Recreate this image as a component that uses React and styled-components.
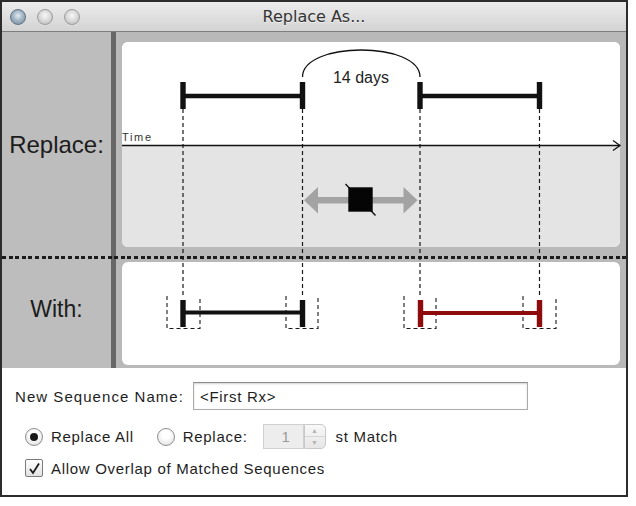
import React from 'react';
import styled, { createGlobalStyle } from 'styled-components';

const GlobalStyle = createGlobalStyle`
  body {
    margin: 0;
    background: #fff;
    font-family: 'Liberation Sans', Arial, sans-serif;
  }
`;

const Window = styled.div`
  width: 628px;
  height: 497px;
  box-sizing: border-box;
  border: 2px solid #2c2c2c;
  display: flex;
  flex-direction: column;
  background: #fff;
`;

const TitleBar = styled.div`
  height: 30px;
  box-sizing: border-box;
  display: grid;
  grid-template-columns: 1fr auto 1fr;
  align-items: center;
  background: linear-gradient(#ececec, #d3d3d3);
  border-bottom: 1px solid #7e7e7e;
`;

const Lights = styled.div`
  display: flex;
  gap: 11px;
  padding-left: 8px;
`;

const Light = styled.span`
  width: 16px;
  height: 16px;
  box-sizing: border-box;
  border-radius: 50%;
  border: 1px solid ${(p) => (p.$active ? '#5f7282' : '#9c9c9c')};
  background: ${(p) =>
    p.$active
      ? 'radial-gradient(circle at 50% 40%, #e4ecf2 0%, #a3b6c5 45%, #71879a 100%)'
      : 'radial-gradient(circle at 50% 40%, #f7f7f7 0%, #d8d8d8 50%, #b5b5b5 100%)'};
`;

const Title = styled.div`
  font-family: 'DejaVu Sans', 'Liberation Sans', sans-serif;
  font-size: 16px;
  color: #333;
  text-shadow: 0 1px 0 rgba(255, 255, 255, 0.6);
`;

const Body = styled.div`
  position: relative;
  height: 336px;
  display: grid;
  grid-template-columns: 109px 5px 1fr;
  grid-template-rows: 223px 5px 1fr;
  background: #b9b9b9;
`;

const LabelCell = styled.div`
  display: flex;
  align-items: center;
  justify-content: center;
  background: #bdbdbd;
  font-size: ${(p) => p.$size}px;
  color: #1c1c1c;
  padding: ${(p) => p.$pad};
`;

const SepBar = styled.div`
  background: #676767;
`;

const ContentCell = styled.div`
  padding: ${(p) => p.$pad};
  display: flex;
`;

const Divider = styled.div`
  grid-column: 1 / -1;
  box-sizing: border-box;
  padding-top: 1px;
  background: linear-gradient(
    to right,
    #bdbdbd 109px,
    #676767 109px,
    #676767 114px,
    #b9b9b9 114px
  );
  &::before {
    content: '';
    display: block;
    height: 3px;
    background: repeating-linear-gradient(to right, #1c1c1c 0 4px, transparent 4px 6.6px);
  }
`;

const Panel = styled.div`
  flex: 1;
  display: flex;
  flex-direction: column;
  border-radius: 6px;
  overflow: hidden;
  background: #fff;
`;

const PanelUpper = styled.div`
  height: 103px;
  background: #fff;
`;

const PanelLower = styled.div`
  flex: 1;
  background: #e4e4e4;
`;

const Overlay = styled.svg`
  position: absolute;
  left: 0;
  top: 0;
  pointer-events: none;
`;

const Form = styled.div`
  flex: 1;
  display: flex;
  flex-direction: column;
  padding-top: 14px;
  font-size: 15px;
  letter-spacing: 0.7px;
  color: #1e1e1e;
`;

const FieldRow = styled.div`
  height: 28px;
  display: flex;
  align-items: center;
  padding-left: 13px;
`;

const FieldLabel = styled.span`
  width: 178px;
  letter-spacing: 1.05px;
`;

const TextInput = styled.input`
  width: 335px;
  height: 28px;
  box-sizing: border-box;
  border: 1px solid #ababab;
  border-top-color: #8c8c8c;
  box-shadow: inset 0 1px 2px rgba(0, 0, 0, 0.18);
  padding: 0 6px;
  font-family: 'Liberation Sans', Arial, sans-serif;
  font-size: 15px;
  letter-spacing: 0.7px;
  color: #1e1e1e;
  outline: none;
`;

const OptionRow = styled.div`
  height: 25px;
  margin-top: ${(p) => p.$top}px;
  display: flex;
  align-items: center;
  padding-left: 23px;
`;

const Radio = styled.span`
  width: 18px;
  height: 18px;
  box-sizing: border-box;
  border-radius: 50%;
  border: 1px solid #8d8d8d;
  background: radial-gradient(circle at 50% 35%, #ffffff 30%, #dadada 100%);
  display: flex;
  align-items: center;
  justify-content: center;
  margin: ${(p) => p.$margin};
  &::after {
    content: '';
    width: 8px;
    height: 8px;
    border-radius: 50%;
    background: ${(p) => (p.$checked ? '#1a1a1a' : 'transparent')};
  }
`;

const OptText = styled.span`
  margin-left: 8px;
`;

const Spinner = styled.div`
  display: flex;
  height: 25px;
  margin-left: ${(p) => p.$left}px;
`;

const SpinField = styled.div`
  width: 41px;
  box-sizing: border-box;
  border: 1px solid #d0d0d0;
  background: #ededed;
  color: #9a9a9a;
  display: flex;
  align-items: center;
  justify-content: flex-end;
  padding-right: 12px;
`;

const Stepper = styled.div`
  width: 22px;
  box-sizing: border-box;
  border: 1px solid #c9c9c9;
  border-radius: 0 5px 5px 0;
  background: linear-gradient(#f8f8f8, #e6e6e6);
  display: flex;
  flex-direction: column;
`;

const StepHalf = styled.div`
  flex: 1;
  display: flex;
  align-items: center;
  justify-content: center;
  font-size: 7px;
  letter-spacing: 0;
  color: #b3b3b3;
  border-top: ${(p) => (p.$lower ? '1px solid #d6d6d6' : 'none')};
`;

const Suffix = styled.span`
  margin-left: 10px;
`;

const CheckRow = styled.div`
  height: 18px;
  margin-top: 10px;
  display: flex;
  align-items: center;
  padding-left: 23px;
`;

const CheckBox = styled.span`
  width: 18px;
  height: 18px;
  box-sizing: border-box;
  border: 1px solid #7b7b7b;
  border-radius: 2px;
  background: linear-gradient(#ffffff, #e2e2e2);
  display: flex;
  align-items: center;
  justify-content: center;
`;

const Bar = ({ x1, x2, y, color, top, h, w }) => (
  <g fill={color}>
    <line x1={x1} y1={y} x2={x2} y2={y} stroke={color} strokeWidth={w} />
    <rect x={x1 - 2.7} y={top} width="5.4" height={h} />
    <rect x={x2 - 2.7} y={top} width="5.4" height={h} />
  </g>
);

const CapBox = ({ x1, x2 }) => (
  <path
    d={`M${x1},296 V328.5 H${x2} V296`}
    fill="none"
    stroke="#1a1a1a"
    strokeWidth="1.1"
    strokeDasharray="4 3"
  />
);

const Diagram = () => (
  <Overlay width="624" height="336" viewBox="2 32 624 336">
    {[183, 302.5, 420, 539.5].map((x) => (
      <line
        key={x}
        x1={x}
        y1="109"
        x2={x}
        y2="297"
        stroke="#1a1a1a"
        strokeWidth="1.2"
        strokeDasharray="4 3"
      />
    ))}
    <line x1="122" y1="145.5" x2="620" y2="145.5" stroke="#111" strokeWidth="1.3" />
    <path d="M613,140.5 L620,145.5 L613,150.5" fill="none" stroke="#111" strokeWidth="1.3" />
    <text
      x="122"
      y="141"
      fontSize="11"
      fontFamily="Liberation Sans, Arial, sans-serif"
      textLength="29"
      fill="#333"
    >
      Time
    </text>

    <Bar x1={183} x2={302.5} y={96} color="#111" top={82} h={27} w={4.5} />
    <Bar x1={420} x2={539.5} y={96} color="#111" top={82} h={27} w={4.5} />
    <path d="M302.5,77 C302.5,41 420,41 420,77" fill="none" stroke="#111" strokeWidth="1.3" />
    <text
      x="361"
      y="83"
      fontSize="16"
      fontFamily="Liberation Sans, Arial, sans-serif"
      textAnchor="middle"
      fill="#222"
    >
      14 days
    </text>

    <rect x="316" y="197" width="90" height="6.5" fill="#a3a3a3" />
    <polygon points="304,200.3 318,187 318,213.5" fill="#a3a3a3" />
    <polygon points="417.5,200.3 403.5,187 403.5,213.5" fill="#a3a3a3" />
    <line x1="345.5" y1="184" x2="375.5" y2="215.5" stroke="#111" strokeWidth="1.4" />
    <rect x="348.3" y="187.3" width="24.4" height="24.4" fill="#050505" />

    <CapBox x1={167} x2={200} />
    <CapBox x1={286} x2={318} />
    <CapBox x1={404} x2={436} />
    <CapBox x1={523} x2={556} />
    <Bar x1={183} x2={302.5} y={312.5} color="#111" top={300} h={27} w={4} />
    <Bar x1={420.5} x2={539.5} y={313} color="#8e0c0c" top={300} h={27} w={4} />
  </Overlay>
);

export default function App() {
  return (
    <>
      <GlobalStyle />
      <Window>
        <TitleBar>
          <Lights>
            <Light $active />
            <Light />
            <Light />
          </Lights>
          <Title>Replace As...</Title>
          <div />
        </TitleBar>
        <Body>
          <LabelCell $size={24} $pad="3px 0 0 0">Replace:</LabelCell>
          <SepBar />
          <ContentCell $pad="10px 6px 8px 6px">
            <Panel>
              <PanelUpper />
              <PanelLower />
            </Panel>
          </ContentCell>
          <Divider />
          <LabelCell $size={23} $pad="0 0 9px 0">With:</LabelCell>
          <SepBar />
          <ContentCell $pad="2px 6px 3px 6px">
            <Panel />
          </ContentCell>
          <Diagram />
        </Body>
        <Form>
          <FieldRow>
            <FieldLabel>New Sequence Name:</FieldLabel>
            <TextInput defaultValue="<First Rx>" />
          </FieldRow>
          <OptionRow $top={14}>
            <Radio $checked />
            <OptText>Replace All</OptText>
            <Radio $margin="0 0 0 23px" />
            <OptText>Replace:</OptText>
            <Spinner $left={15}>
              <SpinField>1</SpinField>
              <Stepper>
                <StepHalf>▲</StepHalf>
                <StepHalf $lower>▼</StepHalf>
              </Stepper>
            </Spinner>
            <Suffix>st Match</Suffix>
          </OptionRow>
          <CheckRow>
            <CheckBox>
              <svg width="13" height="13" viewBox="0 0 13 13">
                <path d="M2,7 L5,11 L11,1.5" fill="none" stroke="#1a1a1a" strokeWidth="1.8" />
              </svg>
            </CheckBox>
            <OptText>Allow Overlap of Matched Sequences</OptText>
          </CheckRow>
        </Form>
      </Window>
    </>
  );
}
